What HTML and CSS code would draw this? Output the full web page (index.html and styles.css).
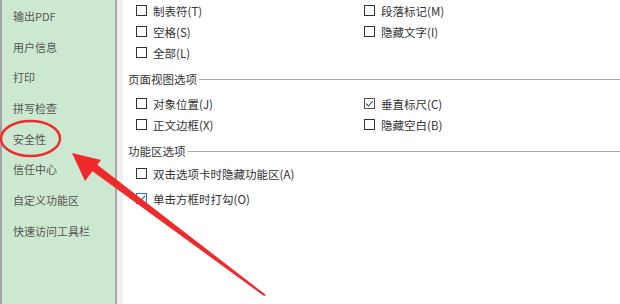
FILE: index.html
```html
<!DOCTYPE html>
<html lang="zh-CN">
<head>
<meta charset="utf-8">
<title>Word 选项</title>
<link rel="stylesheet" href="styles.css">
</head>
<body>
<div class="window">
  <nav class="sidebar">
    <div class="nav-item">输出PDF</div>
    <div class="nav-item">用户信息</div>
    <div class="nav-item">打印</div>
    <div class="nav-item">拼写检查</div>
    <div class="nav-item">安全性</div>
    <div class="nav-item">信任中心</div>
    <div class="nav-item">自定义功能区</div>
    <div class="nav-item">快速访问工具栏</div>
  </nav>
  <div class="strip"></div>
  <main class="content">
    <div class="grid">
      <label class="opt"><span class="box"></span>制表符(T)</label>
      <label class="opt"><span class="box"></span>段落标记(M)</label>
      <label class="opt"><span class="box"></span>空格(S)</label>
      <label class="opt"><span class="box"></span>隐藏文字(I)</label>
      <label class="opt"><span class="box"></span>全部(L)</label>
    </div>
    <div class="section-title"><span>页面视图选项</span></div>
    <div class="grid">
      <label class="opt"><span class="box"></span>对象位置(J)</label>
      <label class="opt"><span class="box checked"><svg viewBox="0 0 11 11" width="11" height="11"><path d="M2 5.6 L4.4 8 L9 3" fill="none" stroke="#444" stroke-width="1.1"/></svg></span>垂直标尺(C)</label>
      <label class="opt"><span class="box"></span>正文边框(X)</label>
      <label class="opt"><span class="box"></span>隐藏空白(B)</label>
    </div>
    <div class="section-title"><span>功能区选项</span></div>
    <div class="list">
      <label class="opt tall"><span class="box"></span>双击选项卡时隐藏功能区(A)</label>
      <label class="opt tall"><span class="box blue"><svg viewBox="0 0 11 11" width="11" height="11"><path d="M2 5.6 L4.4 8 L9 3" fill="none" stroke="#2a6fc9" stroke-width="1.2"/></svg></span>单击方框时打勾(O)</label>
    </div>
  </main>
  <svg class="marks" width="620" height="304" viewBox="0 0 620 304">
    <ellipse cx="30.5" cy="138.5" rx="29.5" ry="17.5" fill="none" stroke="#ee2a2a" stroke-width="2.4"/>
    <polygon points="72,153 101,160 85,181" fill="#ee2a2a"/>
    <polygon points="88,168 95,163 266,295 264,296" fill="#ee2a2a"/>
  </svg>
</div>
</body>
</html>
```
FILE: styles.css
```css
* { box-sizing: border-box; }
html, body { margin: 0; padding: 0; }
body {
  width: 620px;
  height: 304px;
  overflow: hidden;
  background: #ffffff;
  font-family: "Noto Sans CJK SC", "Microsoft YaHei", sans-serif;
}
.window {
  position: relative;
  display: flex;
  width: 620px;
  height: 304px;
}
.sidebar {
  width: 117px;
  flex: none;
  background: #cde8d0;
  border-left: 2px solid #a3a3a3;
  border-right: 2px solid #a8a8a8;
  padding-top: 1px;
  padding-left: 11px;
}
.nav-item {
  height: 30.7px;
  line-height: 30.7px;
  font-size: 11px;
  color: #555555;
  white-space: nowrap;
}
.strip {
  width: 6px;
  flex: none;
  background: #efefef;
}
.content {
  flex: 1;
  padding-left: 5px;
  color: #333333;
  font-size: 11.5px;
}
.grid {
  display: grid;
  grid-template-columns: 228px 1fr;
  padding-left: 8px;
}
.list {
  display: flex;
  flex-direction: column;
  padding-left: 8px;
}
.opt {
  display: flex;
  align-items: center;
  height: 21px;
  white-space: nowrap;
}
.opt.tall { height: 25px; }
.box {
  width: 11px;
  height: 11px;
  border: 1px solid #333333;
  background: #fff;
  margin-right: 6px;
  flex: none;
  position: relative;
}
.box svg {
  position: absolute;
  left: -1px;
  top: -1px;
}
.box.checked { border-color: #555; }
.box.blue { border-color: #2a6fc9; }
.section-title {
  display: flex;
  align-items: center;
  height: 20px;
  margin-top: 6px;
  margin-bottom: 4px;
  font-size: 11.5px;
  color: #333;
}
.section-title + .list { margin-top: -4px; }
.section-title::after {
  content: "";
  flex: 1;
  height: 1px;
  background: #a9a9a9;
  margin-left: 2px;
}
.marks {
  position: absolute;
  left: 0;
  top: 0;
  pointer-events: none;
}
```
